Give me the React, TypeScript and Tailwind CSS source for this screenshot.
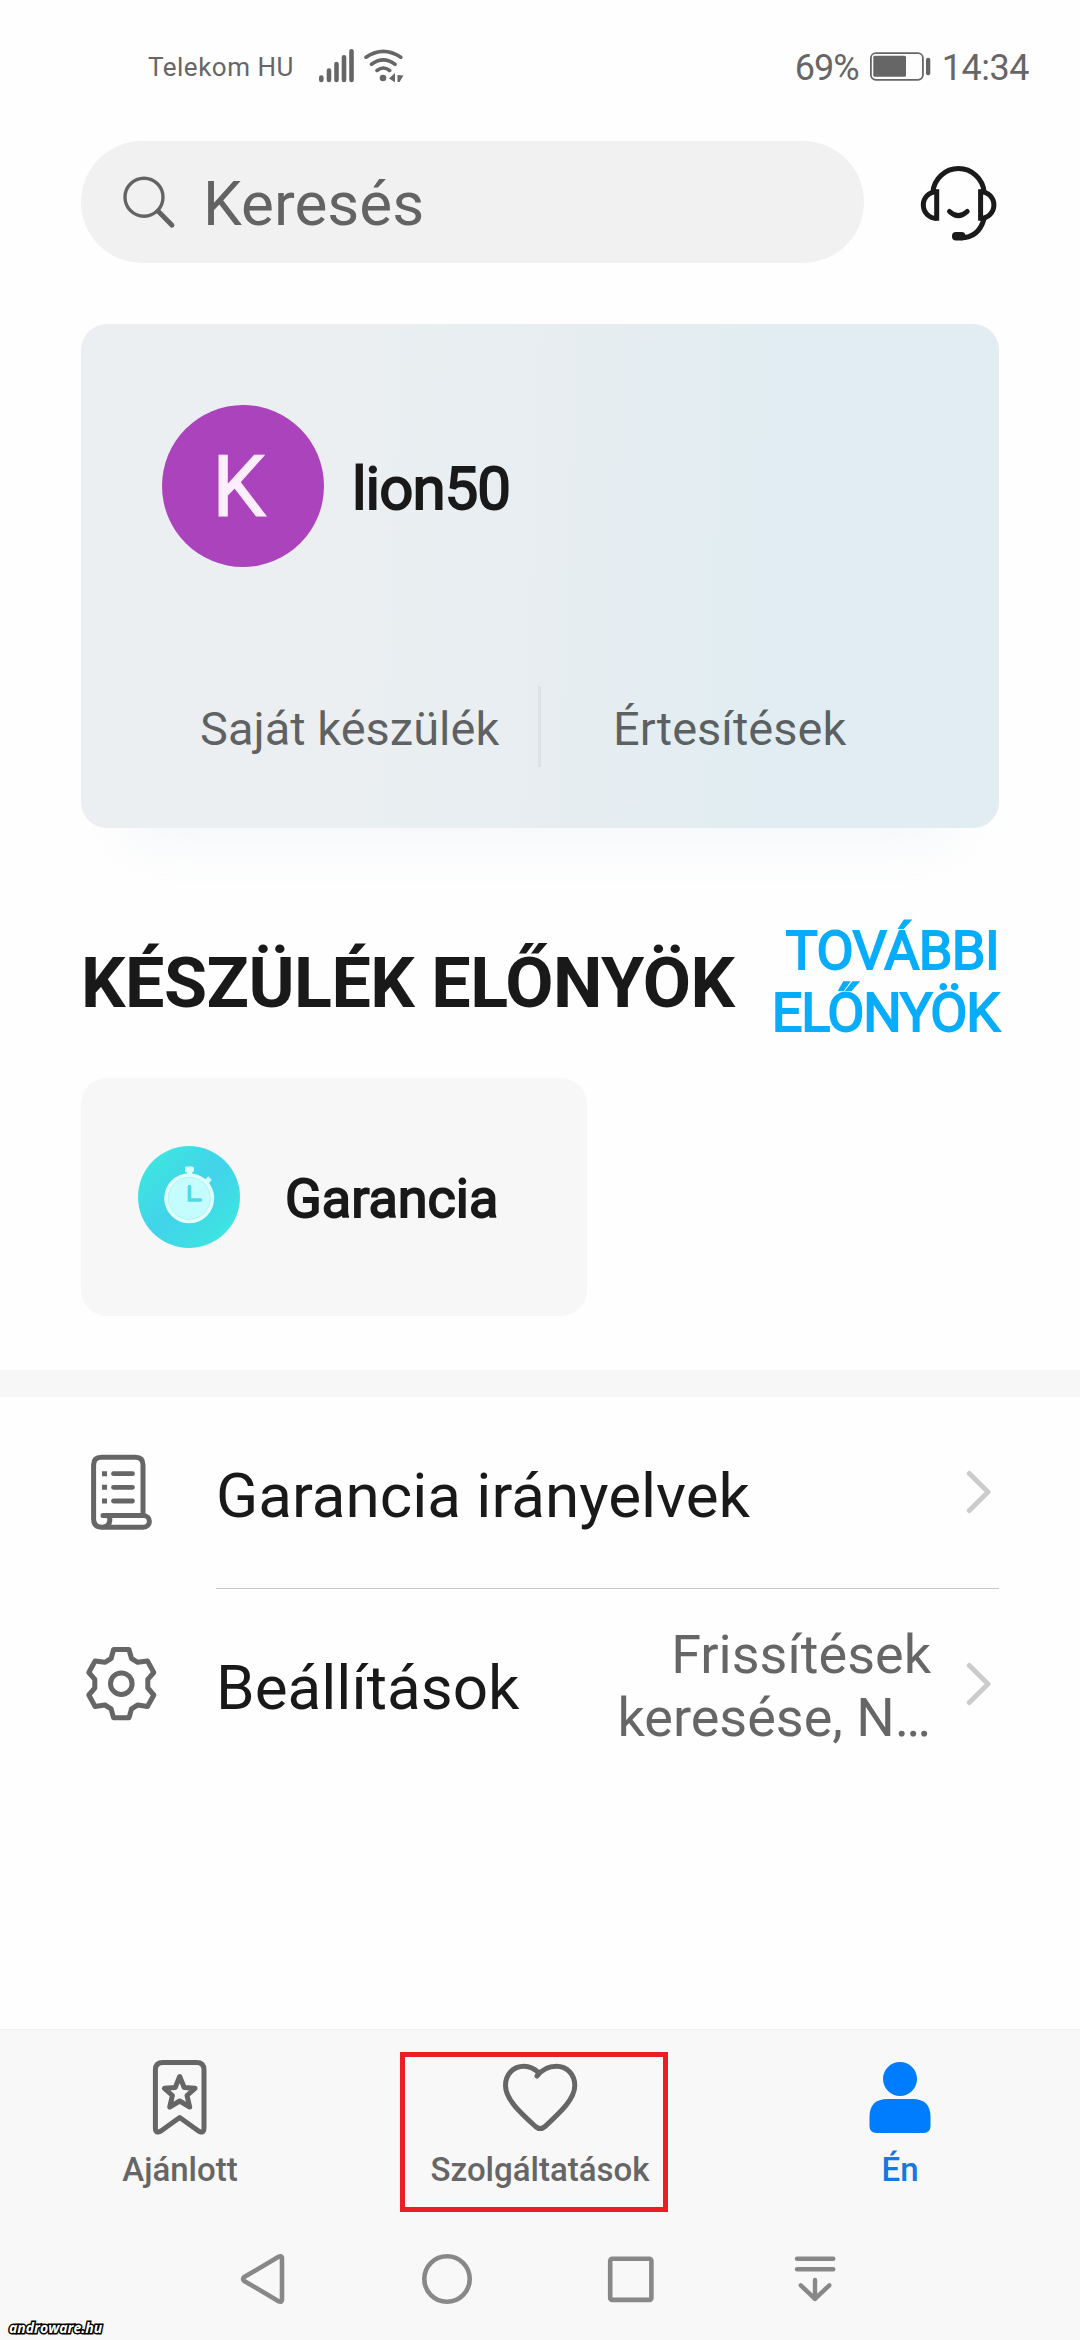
import React from "react";

function StatusBar() {
  return (
    <header className="flex h-[141px] items-start justify-between pl-[148px] pr-[51px] text-[#666]">
      <div className="flex pt-[46px]">
        <span className="w-[170px] whitespace-nowrap pt-[5px] text-[26px] leading-[32px] tracking-[0.5px]">Telekom HU</span>
        <svg className="mt-[-1px]" width="90" height="42" viewBox="318 45 90 42" fill="none" stroke="currentColor" strokeLinecap="round">
          <path strokeWidth="4.6" d="M321.3 77.5V80M329 70.5V80M336.5 64V80M344 57.3V80M351.5 51.3V80" />
          <path strokeWidth="3.6" d="M366 57.2Q383.3 45.5 400.8 57.2M371.5 64.3Q383.3 55.5 395 64.3M377 70.5Q383.3 65.5 389.7 70.5" />
          <circle cx="383" cy="78" r="3.3" fill="currentColor" stroke="none" />
          <path d="M389 78.5L395 73V82.3ZM397.5 75L403.5 75.5L399.5 82H397.5Z" fill="currentColor" stroke="none" />
        </svg>
      </div>
      <div className="flex pt-[46px]">
        <span className="w-[74px] pt-px text-[36px] leading-[42px] tracking-[-1px]">69%</span>
        <svg width="64" height="42" viewBox="868 46 64 42" fill="none" stroke="currentColor">
          <rect x="869.9" y="53.2" width="52" height="26.6" rx="5" strokeWidth="1.8" />
          <rect x="872.3" y="55.7" width="32.7" height="21" rx="1.5" fill="currentColor" stroke="none" />
          <rect x="925" y="57.7" width="4.3" height="17.5" rx="2" fill="currentColor" stroke="none" />
        </svg>
        <span className="pl-[9px] pt-px text-[36px] leading-[42px] tracking-[-0.5px]">14:34</span>
      </div>
    </header>
  );
}

function SearchRow() {
  return (
    <div className="flex h-[122px] items-center pl-[81px]">
      <div className="flex h-[122px] w-[783px] items-center rounded-full bg-[#f1f1f1] pl-[39px] text-[#636363]">
        <svg width="56" height="60" viewBox="120 172 56 60" fill="none" stroke="currentColor" strokeLinecap="round">
          <circle cx="144" cy="197.2" r="19" strokeWidth="3.4" />
          <path d="M158 211L172 225.3" strokeWidth="4.8" />
        </svg>
        <span className="pl-[27px] pt-[4px] text-[62px] leading-[72px]">Keresés</span>
      </div>
      <svg className="ml-[54px] mt-[2px]" width="82" height="82" viewBox="918 162 82 82" fill="none" stroke="#1a1a1a" strokeWidth="5">
        <path d="M932.9 192A25.7 25.7 0 0 1 984.1 192" />
        <path d="M936.7 218.3A13.4 13.3 0 0 1 936.7 191.7M980.6 191.7A13.3 13.3 0 0 1 980.6 218.3" />
        <path d="M936.7 189.3V220.7M980.6 189.3V220.7" />
        <path d="M949.5 211.5Q958.3 219.8 967.2 211.5" strokeLinecap="round" />
        <path d="M984 219C980.5 231 973 237.8 961 237.8" />
        <rect x="952" y="232" width="13.5" height="8.6" rx="4" fill="#1a1a1a" stroke="none" />
      </svg>
    </div>
  );
}

function ProfileCard() {
  return (
    <section className="mx-[81px] mt-[61px] flex h-[504px] flex-col rounded-[26px] bg-[linear-gradient(92deg,#ebeff2_32%,#e6edf1_54%,#e1edf2_74%)] pt-[81px] shadow-[0_62px_50px_-52px_rgba(190,205,230,0.18)]">
      <div className="flex items-center pl-[81px]">
        <div className="flex size-[162px] items-center justify-center rounded-full bg-[#ab44bc] pr-[8px] text-[86px] text-[#fdeefe] [-webkit-text-stroke:1px_#fdeefe]">
          <span className="pt-[2px] leading-none">K</span>
        </div>
        <span className="pl-[28px] pt-[5px] text-[60px] leading-[70px] tracking-[-1px] text-[#191919] [-webkit-text-stroke:1.8px_#191919]">lion50</span>
      </div>
      <div className="mt-[119px] flex h-[81px] items-center text-[47px] leading-[56px] text-black/60">
        <span className="w-[457px] pl-[119px] pt-[5px]">Saját készülék</span>
        <span className="h-full w-[3px] bg-[#dce1e4]" />
        <span className="pl-[72px] pt-[5px]">Értesítések</span>
      </div>
    </section>
  );
}

function Benefits() {
  return (
    <section className="px-[81px]">
      <div className="mt-[92px] flex h-[124px] items-center justify-between">
        <h2 className="whitespace-nowrap pt-[2px] text-[70px] font-bold leading-[82px] tracking-[-0.5px] text-[#191919]">KÉSZÜLÉK ELŐNYÖK</h2>
        <a className="flex flex-col items-end text-[54px] leading-[62px] text-[#07adfb] [-webkit-text-stroke:1.8px_#07adfb]">
          <span className="tracking-[-0.6px]">TOVÁBBI</span>
          <span className="tracking-[-1.2px]">ELŐNYÖK</span>
        </a>
      </div>
      <div className="mt-[34px] flex h-[238px] w-[506px] items-center rounded-[26px] bg-[#f7f7f7] pl-[57px]">
        <svg width="102" height="102" viewBox="138 1146 102 102">
          <defs>
            <linearGradient id="disc" x1="0" y1="0" x2="1" y2="1">
              <stop offset="0.15" stopColor="#3ee4e2" />
              <stop offset="0.5" stopColor="#41d3ea" />
              <stop offset="0.85" stopColor="#3ee4e2" />
            </linearGradient>
          </defs>
          <circle cx="189" cy="1197" r="51" fill="url(#disc)" />
          <rect x="185" y="1166.5" width="8.8" height="5.8" rx="1.5" fill="#dcffff" />
          <rect x="187" y="1171" width="5" height="5" fill="#dcffff" />
          <path d="M206.5 1182L210 1178" stroke="#c8fcff" strokeWidth="5" />
          <circle cx="189.2" cy="1198.3" r="25" fill="#e2ffff" />
          <circle cx="189.2" cy="1198.3" r="21" fill="#c5fdff" stroke="#a5f0f5" strokeWidth="0.8" />
          <path d="M189.5 1186.5V1200H200.5" stroke="#4fd8e6" strokeWidth="3.6" fill="none" strokeLinecap="round" />
        </svg>
        <span className="pl-[45px] pt-[3px] text-[54px] leading-[64px] text-[#191919] [-webkit-text-stroke:1.8px_#191919]">Garancia</span>
      </div>
    </section>
  );
}

function Chevron() {
  return (
    <svg width="26" height="48" viewBox="0 0 26 48" fill="none" stroke="#cccccc" strokeWidth="5" strokeLinecap="round" strokeLinejoin="round">
      <path d="M3.3 5.5L22 24L3.3 42.5" />
    </svg>
  );
}

function Menu() {
  return (
    <nav className="px-[81px] text-[#191919]">
      <div className="flex h-[191px] items-center pb-px">
        <svg width="81" height="82" viewBox="81 1451 81 82" fill="none" stroke="#666" strokeWidth="5" strokeLinecap="round" strokeLinejoin="round">
          <path d="M143 1515V1465Q143 1457.3 135.5 1457.3H101.5Q93.6 1457.3 93.6 1465V1519Q93.6 1527.2 101.5 1527.2H143.5A5.9 5.9 0 0 0 143.5 1515.4H103M106 1515.5Q110.5 1516 109.7 1521Q109 1526 104 1527" />
          <path d="M113.5 1473.7H132.5M113.5 1487.3H132.5M113.5 1501H132.5" strokeWidth="4.8" />
          <path d="M102 1473.7H107M102 1487.3H107M102 1501H107" strokeLinecap="butt" />
        </svg>
        <span className="flex-1 pl-[54px] pt-[7px] text-[62px] leading-[72px]">Garancia irányelvek</span>
        <div className="pr-[7px]"><Chevron /></div>
      </div>
      <div className="ml-[135px] h-px bg-[#c8c8c8]" />
      <div className="flex h-[189px] items-center">
        <svg width="81" height="82" viewBox="81 1643 81 82" fill="none" stroke="#666" strokeWidth="5" strokeLinejoin="round">
          <path d="M113.6 1649.5H129L131.5 1658.5L137.7 1662.3L147.5 1661L153.8 1672.5L147.8 1679.3V1688L153.8 1695L147.5 1706.5L137.7 1705L131.5 1708.8L129 1717.8H113.6L111.1 1708.8L104.9 1705L95.1 1706.5L88.8 1695L94.8 1688V1679.3L88.8 1672.5L95.1 1661L104.9 1662.3L111.1 1658.5Z" />
          <circle cx="121.3" cy="1683.7" r="10.8" />
        </svg>
        <span className="flex-1 pl-[54px] pt-[8px] text-[62px] leading-[72px]">Beállítások</span>
        <span className="pr-[35px] pt-[5px] text-right text-[54px] leading-[63px] text-[#666]">
          Frissítések
          <br />
          keresése, N…
        </span>
        <div className="pr-[7px]"><Chevron /></div>
      </div>
    </nav>
  );
}

function BottomBar() {
  return (
    <footer className="relative mt-auto h-[311px] border-t border-[#f0f0f0] bg-[#f8f8f8]">
      <div className="grid grid-cols-3 pt-[25px] text-[33px] font-medium leading-[38px] text-[#666]">
        <div className="flex flex-col items-center">
          <svg width="84" height="84" viewBox="138 2055 84 84" fill="none" stroke="currentColor" strokeWidth="5" strokeLinejoin="round">
            <path d="M155.4 2070Q155.4 2062.6 163 2062.6H196.5Q204 2062.6 204 2070V2128Q204 2134 198.5 2131L179.7 2117.5L160.9 2131Q155.4 2134 155.4 2128Z" />
            <path d="M179.7 2076.5L184.2 2087.5L195 2088.3L187 2095.5L189.7 2107L179.7 2101L169.7 2107L172.4 2095.5L164.4 2088.3L175.2 2087.5Z" />
          </svg>
          <span className="pt-[12px]">Ajánlott</span>
        </div>
        <div className="flex flex-col items-center">
          <svg width="84" height="84" viewBox="497.5 2055 84 84" fill="none" stroke="currentColor" strokeWidth="5" strokeLinecap="round" strokeLinejoin="round">
            <path d="M538.5 2073C534 2068.5 529 2066.2 523.5 2066.2C512.5 2066.2 505 2074.5 505 2085.5C505 2099 519 2112 535 2126.5Q539.7 2130.5 544.5 2126.5C560 2112 574.3 2099 574.3 2085.5C574.3 2074.5 566.5 2066.2 556 2066.2C547 2066.2 541 2070 536.5 2076" />
          </svg>
          <span className="pt-[12px]">Szolgáltatások</span>
        </div>
        <div className="flex flex-col items-center text-[#1478e0]">
          <svg width="84" height="84" viewBox="857.5 2055 84 84" fill="#007dff">
            <circle cx="899.5" cy="2079" r="17" />
            <path d="M869 2117Q869 2099 887 2099H912Q930 2099 930 2117V2126Q930 2133 923 2133H876Q869 2133 869 2126Z" />
          </svg>
          <span className="pt-[12px]">Én</span>
        </div>
      </div>
      <div className="mt-[60px] flex h-[60px] items-center justify-between pl-[233px] pr-[235px] text-[#888]">
        <svg width="60" height="60" viewBox="233 2249 60 60" fill="none" stroke="currentColor" strokeWidth="4.6" strokeLinejoin="round">
          <path d="M243.8 2277.3L279 2256.6Q282 2255.5 282 2258.5V2299.5Q282 2302.5 279 2301.4L243.8 2280.7Q242.5 2279 243.8 2277.3Z" />
        </svg>
        <svg width="60" height="60" viewBox="417 2249 60 60" fill="none" stroke="currentColor" strokeWidth="4.6">
          <circle cx="447" cy="2279" r="22.7" />
        </svg>
        <svg width="60" height="60" viewBox="601 2249 60 60" fill="none" stroke="currentColor" strokeWidth="4.6">
          <rect x="610.2" y="2258.7" width="41.2" height="41.2" rx="2" />
        </svg>
        <svg width="60" height="60" viewBox="785 2249 60 60" fill="none" stroke="currentColor" strokeWidth="4.4" strokeLinecap="round" strokeLinejoin="round">
          <path d="M797 2258.7H833.3M797 2269.3H833.3M815 2280V2299M800.8 2285.3L815 2298.8L829.3 2285.3" />
        </svg>
      </div>
      <div className="absolute left-[400px] top-[22px] h-[160px] w-[268px] border-[5px] border-[#ea1f25]" />
      <span className="absolute left-[9px] top-[289px] whitespace-nowrap font-['Open_Sans',sans-serif] text-[14px] font-bold italic leading-[18px] text-white [-webkit-text-stroke:3px_black] [paint-order:stroke_fill]">androware.hu</span>
    </footer>
  );
}

export default function App() {
  return (
    <main className="flex h-[2340px] w-[1080px] flex-col overflow-hidden bg-[#fefefe] font-[Roboto,sans-serif]">
      <StatusBar />
      <SearchRow />
      <ProfileCard />
      <Benefits />
      <div className="mt-[54px] h-[27px] bg-[#f7f7f7]" />
      <Menu />
      <BottomBar />
    </main>
  );
}
